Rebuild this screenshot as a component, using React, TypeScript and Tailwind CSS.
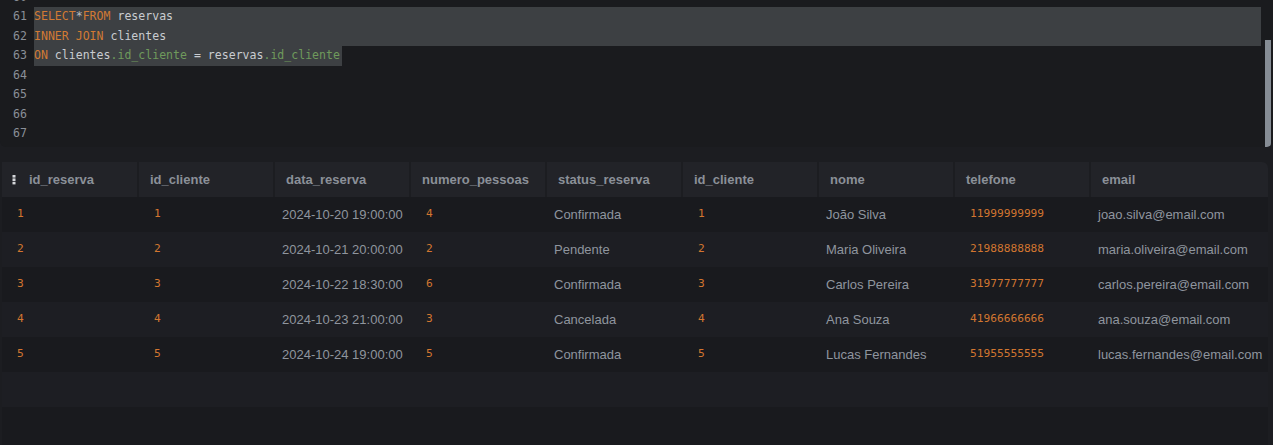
import React from 'react';

const rows = [
  { id: 1, cli: 1, data: '2024-10-20 19:00:00', pes: 4, status: 'Confirmada', nome: 'João Silva', tel: '11999999999', email: 'joao.silva@email.com' },
  { id: 2, cli: 2, data: '2024-10-21 20:00:00', pes: 2, status: 'Pendente', nome: 'Maria Oliveira', tel: '21988888888', email: 'maria.oliveira@email.com' },
  { id: 3, cli: 3, data: '2024-10-22 18:30:00', pes: 6, status: 'Confirmada', nome: 'Carlos Pereira', tel: '31977777777', email: 'carlos.pereira@email.com' },
  { id: 4, cli: 4, data: '2024-10-23 21:00:00', pes: 3, status: 'Cancelada', nome: 'Ana Souza', tel: '41966666666', email: 'ana.souza@email.com' },
  { id: 5, cli: 5, data: '2024-10-24 19:00:00', pes: 5, status: 'Confirmada', nome: 'Lucas Fernandes', tel: '51955555555', email: 'lucas.fernandes@email.com' },
];

const headers = ['id_reserva', 'id_cliente', 'data_reserva', 'numero_pessoas', 'status_reserva', 'id_cliente', 'nome', 'telefone', 'email'];

const grid = 'grid grid-cols-[135px_134px_134px_134px_134px_134px_134px_134px_1fr] gap-x-[2px]';
const mono = { fontFamily: '"DejaVu Sans Mono", monospace' };

const Kw = ({ children }: { children: React.ReactNode }) => <span className="text-[#d27a33]">{children}</span>;
const Fld = ({ children }: { children: React.ReactNode }) => <span className="text-[#6f9a5c]">{children}</span>;

const DotsIcon = () => (
  <svg width="4" height="10" viewBox="0 0 4 10" className="shrink-0">
    <rect x="0.5" y="0" width="3" height="2.6" fill="#d4d6d9" />
    <rect x="0.5" y="3.4" width="3" height="2.6" fill="#d4d6d9" />
    <rect x="0.5" y="6.8" width="3" height="2.6" fill="#d4d6d9" />
  </svg>
);

const NumCell = ({ v }: { v: React.ReactNode }) => (
  <div className="pl-[15px] text-[11.2px] text-[#d27630] flex items-center" style={mono}>{v}</div>
);
const TxtCell = ({ v }: { v: React.ReactNode }) => (
  <div className="pl-[7px] text-[13px] text-[#8f959e] flex items-center whitespace-nowrap">{v}</div>
);

export default function App() {
  const lines: { n: number; sel: 'full' | 'part' | 'none'; code: React.ReactNode }[] = [
    { n: 60, sel: 'none', code: null },
    { n: 61, sel: 'full', code: <><Kw>SELECT</Kw><span className="text-[#b9bdc2]">*</span><Kw>FROM</Kw> reservas</> },
    { n: 62, sel: 'full', code: <><Kw>INNER JOIN</Kw> clientes</> },
    { n: 63, sel: 'part', code: <><Kw>ON</Kw> clientes<Fld>.id_cliente</Fld> = reservas<Fld>.id_cliente</Fld></> },
    { n: 64, sel: 'none', code: null },
    { n: 65, sel: 'none', code: null },
    { n: 66, sel: 'none', code: null },
    { n: 67, sel: 'none', code: null },
  ];

  return (
    <div className="w-[1273px] h-[445px] overflow-hidden bg-[#1c1d21] flex flex-col" style={{ fontFamily: '"Liberation Sans", Arial, sans-serif' }}>
      {/* editor */}
      <div className="relative h-[147px] shrink-0 overflow-hidden rounded-b-[6px] bg-[#1a1b1e]">
        <div className="mt-[-12.5px] flex flex-col">
          {lines.map((l) => (
            <div key={l.n} className="flex h-[19.5px] items-center text-[11.55px] text-[#c9ccd0]" style={mono}>
              <div className="w-[34px] shrink-0 pl-[13px] text-[#8a8f98]">{l.n}</div>
              <div className={
                l.sel === 'full'
                  ? 'w-[1227px] h-full flex items-center bg-[#3d4043] whitespace-pre'
                  : l.sel === 'part'
                  ? 'h-full flex items-center bg-[#3d4043] whitespace-pre pr-[2px]'
                  : 'h-full flex items-center whitespace-pre'
              }>{l.code}</div>
            </div>
          ))}
        </div>
        <div className="absolute left-[1265px] top-[40px] w-[6px] h-[107px] bg-[#868d95] rounded-br-[4px]" />
      </div>

      {/* result grid */}
      <div className="mt-[15px] ml-[2px] w-[1266px] flex flex-col">
        <div className={`${grid} h-[35px] bg-[#1c1d21]`}>
          {headers.map((h, i) => (
            <div key={i} className={`bg-[#222328] flex items-center text-[13px] font-bold text-[#8b9098] ${i === 0 ? 'pl-[10px] gap-[13px]' : 'pl-[11px]'} ${i === headers.length - 1 ? 'rounded-tr-[6px]' : ''}`}>
              {i === 0 && <DotsIcon />}
              <span>{h}</span>
            </div>
          ))}
        </div>
        {rows.map((r, i) => (
          <div key={r.id} className={`${grid} h-[35px] ${i % 2 === 0 ? 'bg-[#191a1e]' : 'bg-[#1d1e23]'}`}>
            <NumCell v={r.id} />
            <NumCell v={r.cli} />
            <TxtCell v={r.data} />
            <NumCell v={r.pes} />
            <TxtCell v={r.status} />
            <NumCell v={r.cli} />
            <TxtCell v={r.nome} />
            <NumCell v={r.tel} />
            <TxtCell v={r.email} />
          </div>
        ))}
        <div className="h-[35px] bg-[#1d1e23]" />
        <div className="h-[40px] bg-[#191a1e]" />
      </div>
    </div>
  );
}
